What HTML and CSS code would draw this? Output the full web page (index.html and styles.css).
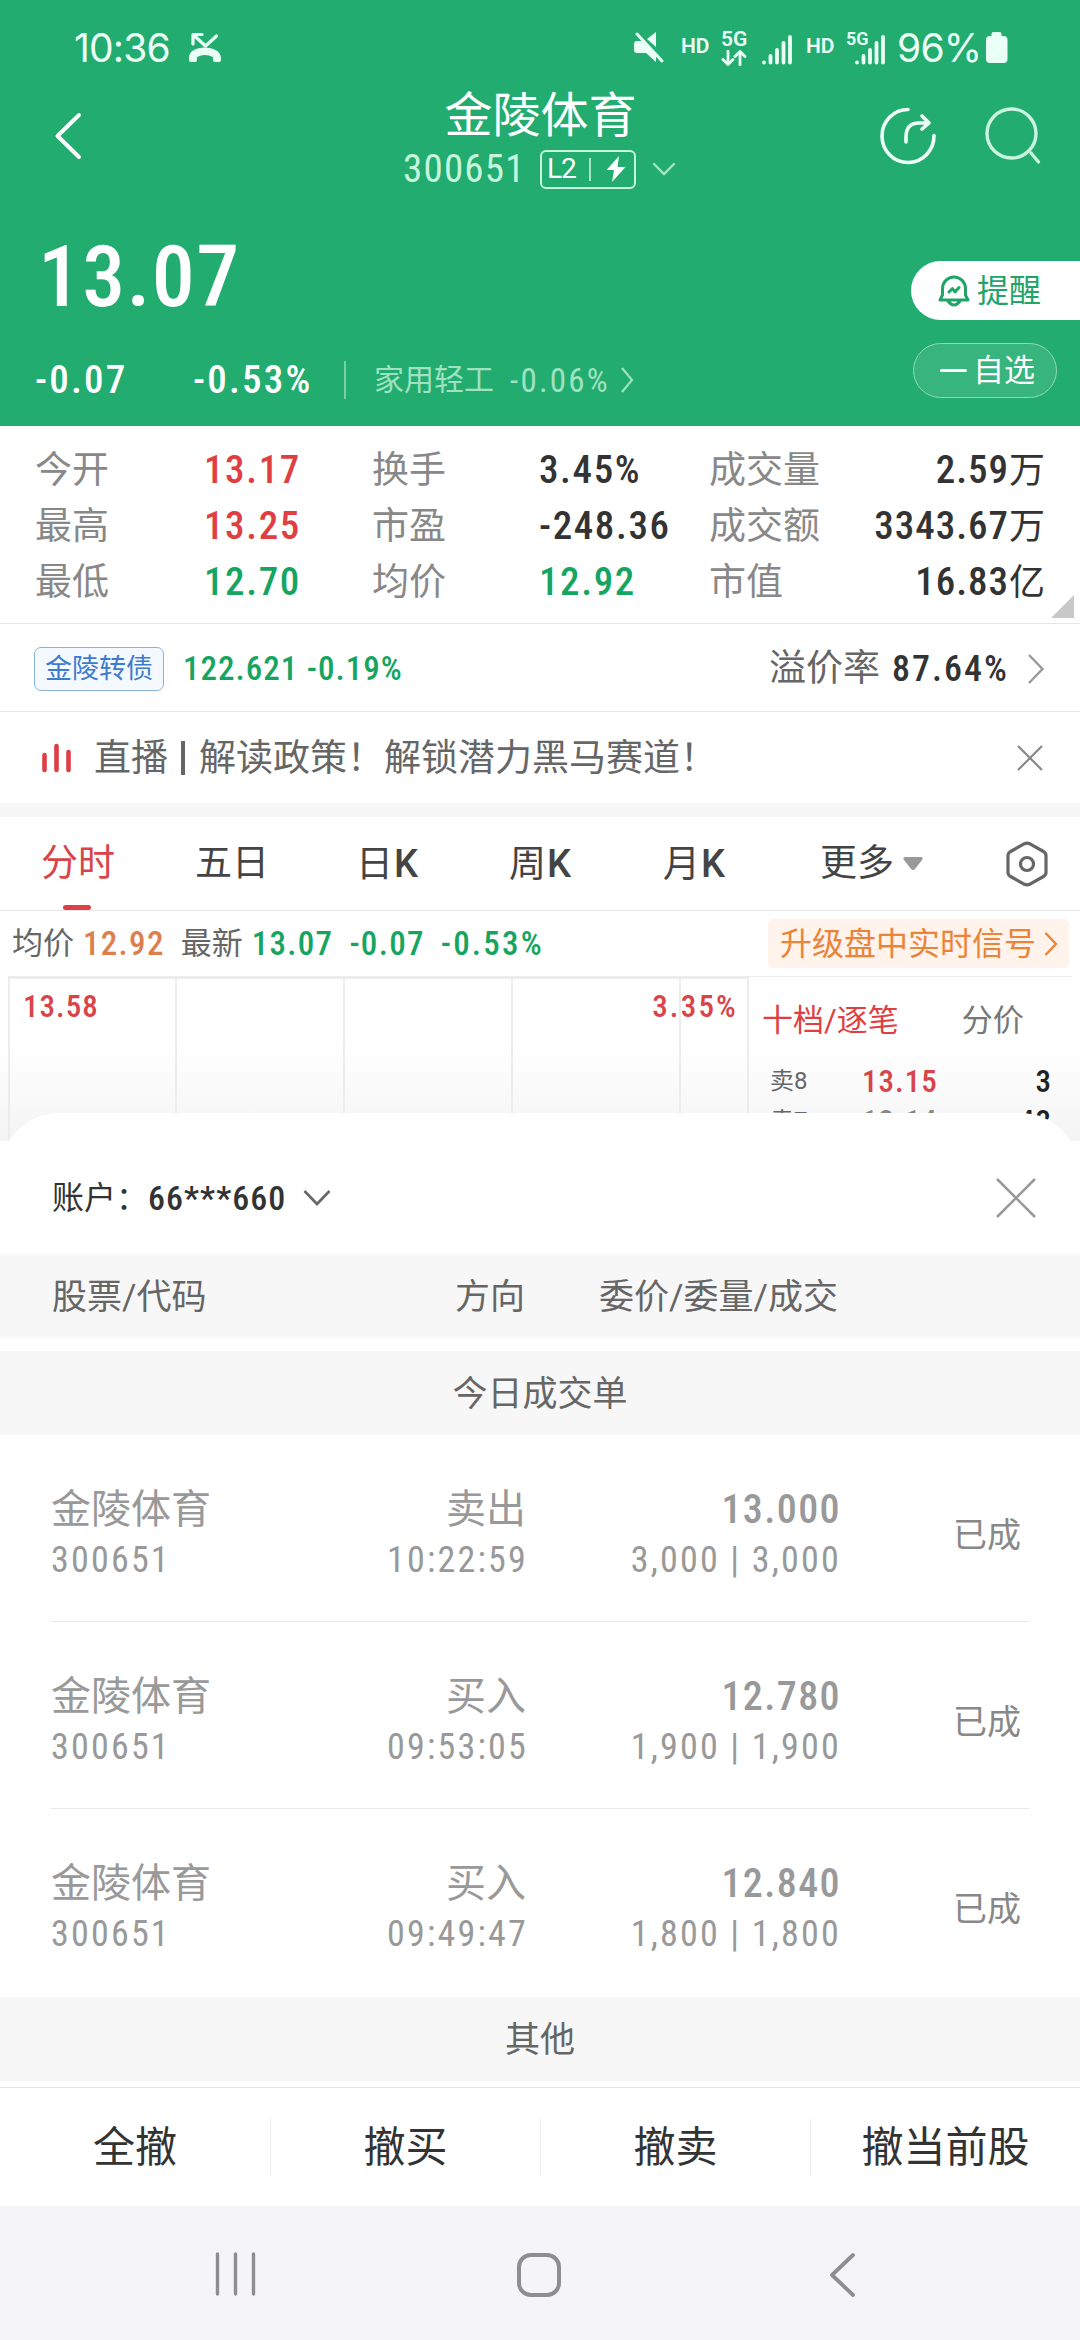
FILE: index.html
```html
<!DOCTYPE html>
<html lang="zh-CN">
<head>
    <meta charset="UTF-8">
    <meta name="viewport" content="width=device-width, initial-scale=1.0">
    <title>金陵体育 300651</title>
    <link rel="stylesheet" href="styles.css">
</head>

<body>

    <header class="top">
        <div class="status">
            <span class="clock">10:36</span>
            <svg class="missed" width="34" height="30" viewBox="0 0 34 30" fill="none" stroke="#eafff5" stroke-width="3.2" stroke-linecap="round" stroke-linejoin="round">
                <path d="M5 12V2.500H14M5.500 3L17.500 14L28.500 4"/>
                <path d="M1 26C0 12 33 12 33 26V28Q33 30 31 30H27Q25 30 25 28V25Q17 21 9 25V28Q9 30 7 30H3Q1 30 1 28Z" fill="#eafff5" stroke="none"/>
            </svg>
            <div class="status-right">
                <svg class="mute" width="32" height="32" viewBox="0 0 32 32" fill="#eafff5">
                    <path d="M0 13Q0 10 3 10H8L22 24V31L12 22H3Q0 22 0 19ZM13 8L22 1V16Z"/>
                    <path d="M3 3L28 30" stroke="#eafff5" stroke-width="3" stroke-linecap="round"/>
                </svg>
                <span class="hd">HD</span>
                <div class="net">
                    <span>5G</span>
                    <svg width="26" height="16" viewBox="0 0 26 16" fill="none" stroke="#eafff5" stroke-width="2.800" stroke-linecap="round" stroke-linejoin="round">
                        <path d="M7 1V14M2 9.500L7 14.500L12 9.500M19 15V2M14 6.500L19 1.500L24 6.500"/>
                    </svg>
                </div>
                <svg class="bars" width="30" height="30" viewBox="0 0 30 30" stroke="#eafff5" stroke-width="3.800" stroke-linecap="round">
                    <path d="M2 27.500V27.600M8.500 21V27.600M15 15V27.600M21.500 8V27.600M28 2V27.600"/>
                </svg>
                <span class="hd">HD</span>
                <div class="net2">
                    <span>5G</span>
                    <svg class="bars" width="30" height="30" viewBox="0 0 30 30" stroke="#eafff5" stroke-width="3.800" stroke-linecap="round">
                        <path d="M2 27.500V27.600M8.500 21V27.600M15 15V27.600M21.500 8V27.600M28 2V27.600"/>
                    </svg>
                </div>
                <span class="percent">96%</span>
                <svg class="battery" width="22" height="32" viewBox="0 0 22 32" fill="#eafff5">
                    <rect x="5.500" y="0" width="10" height="8" rx="2"/>
                    <rect x="0" y="4" width="21.500" height="27" rx="4"/>
                </svg>
            </div>
        </div>

        <div class="titlebar">
            <svg class="back" width="30" height="50" viewBox="0 0 30 50" fill="none" stroke="#fff" stroke-width="4" stroke-linecap="round" stroke-linejoin="round">
                <path d="M27 5L5.500 26L27 47"/>
            </svg>
            <div class="title">
                <h1>金陵体育</h1>
                <div class="sub">
                    <span class="code">300651</span>
                    <span class="level">
                        <b>L2</b><i></i>
                        <svg width="20" height="28" viewBox="0 0 20 28" fill="#fff"><path d="M13 1L0.500 15H8L6 27L19.500 12H11.500Z"/></svg>
                    </span>
                    <svg width="24" height="14" viewBox="0 0 24 14" fill="none" stroke="#a6e6c8" stroke-width="2.400" stroke-linecap="round"><path d="M2 2L12 12L22 2"/></svg>
                </div>
            </div>
            <div class="tools">
                <svg width="58" height="60" viewBox="0 0 58 60" fill="none" stroke="#eefff7" stroke-width="3.600" stroke-linecap="round" stroke-linejoin="round">
                    <path d="M29 3.500A26 26.500 0 1 0 55 29.500M27 36V31Q27 17 40 17H48M43 10L50 17L43 23"/>
                </svg>
                <svg width="58" height="60" viewBox="0 0 58 60" fill="none" stroke="#c9f5df" stroke-width="3.400" stroke-linecap="round">
                    <circle cx="27.500" cy="27.500" r="24.500"/><path d="M47 47L54.500 56"/>
                </svg>
            </div>
        </div>

        <div class="quote">
            <div class="quote-left">
                <div class="price">13.07</div>
                <div class="change">
                    <span class="diff">-0.07</span>
                    <span class="rate">-0.53%</span>
                    <a class="sector">家用轻工 <em>-0.06%</em>
                        <svg width="14" height="26" viewBox="0 0 14 26" fill="none" stroke="#9fe2c2" stroke-width="2.200"><path d="M2 1L12 13L2 25"/></svg>
                    </a>
                </div>
            </div>
            <div class="quote-right">
                <button class="remind">
                    <svg width="32" height="32" viewBox="0 0 32 32" fill="none" stroke="#21a468" stroke-width="3" stroke-linejoin="round" stroke-linecap="round">
                        <path d="M4.500 20V13.500A11.500 11.500 0 0 1 27.500 13.500V20L30 25H2ZM10 26Q16 34 22 26M11 17L14.500 13.500L17 17L21 12.500"/>
                    </svg>
                    提醒
                </button>
                <button class="fav"><i></i>自选</button>
            </div>
        </div>
    </header>

    <section class="stats">
        <span>今开</span><b class="red">13.17</b><span>换手</span><b>3.45%</b><span>成交量</span><b class="r">2.59<i>万</i></b>
        <span>最高</span><b class="red">13.25</b><span>市盈</span><b>-248.36</b><span>成交额</span><b class="r">3343.67<i>万</i></b>
        <span>最低</span><b class="green">12.70</b><span>均价</span><b class="green">12.92</b><span>市值</span><b class="r">16.83<i>亿</i></b>
        <i class="corner"></i>
    </section>

    <section class="bond">
        <span class="tag">金陵转债</span>
        <b class="green">122.621 -0.19%</b>
        <span class="premium">溢价率</span>
        <b class="premium-val">87.64%</b>
        <svg width="18" height="30" viewBox="0 0 18 30" fill="none" stroke="#999" stroke-width="2.400"><path d="M2 1L15.500 15L2 29"/></svg>
    </section>

    <section class="live">
        <svg width="30" height="30" viewBox="0 0 30 30" stroke="#dd3f46" stroke-width="4.600" stroke-linecap="round"><path d="M2.500 12V27M14.500 3V27M26.500 9V27"/></svg>
        <p>直播<i></i>解读政策！解锁潜力黑马赛道！</p>
        <svg class="close" width="26" height="26" viewBox="0 0 26 26" stroke="#888" stroke-width="2.200"><path d="M1 1L25 25M25 1L1 25"/></svg>
    </section>

    <nav class="tabs">
        <a class="active">分时</a>
        <a>五日</a>
        <a>日<b>K</b></a>
        <a>周<b>K</b></a>
        <a>月<b>K</b></a>
        <a class="more">更多<svg width="20" height="14" viewBox="0 0 20 14" fill="#999"><path d="M1.500 0H18.500Q20.500 1 19 3L12 12Q10 14 8 12L1 3Q-0.500 1 1.500 0Z"/></svg></a>
        <svg class="gear" width="42" height="46" viewBox="0 0 42 46" fill="none" stroke="#666" stroke-width="3.200" stroke-linejoin="round">
            <path d="M18.500 2.700Q21 1.500 23.500 2.700L37.500 10.500Q40 12 40 14.500V31.500Q40 34 37.500 35.500L23.500 43.300Q21 44.500 18.500 43.300L4.500 35.500Q2 34 2 31.500V14.500Q2 12 4.500 10.500Z"/><circle cx="21" cy="23" r="6.500"/>
        </svg>
    </nav>

    <section class="info">
        <span>均价</span><b class="orange">12.92</b>
        <span>最新</span><b class="green">13.07</b><b class="green">-0.07</b><b class="green">-0.53%</b>
        <a class="upgrade">升级盘中实时信号<svg width="14" height="24" viewBox="0 0 14 24" fill="none" stroke="#ea8438" stroke-width="2.400"><path d="M1.500 1L12 12L1.500 23"/></svg></a>
    </section>

    <section class="market">
        <div class="chart">
            <div class="cell"><b>13.58</b></div>
            <div class="cell"></div>
            <div class="cell"></div>
            <div class="cell"></div>
            <div class="cell"></div>
            <b class="top-rate">3.35%</b>
        </div>
        <div class="book">
            <div class="book-tabs"><a class="red">十档/逐笔</a><a>分价</a></div>
            <div class="order"><span>卖8</span><b>13.15</b><b class="qty">3</b></div>
            <div class="order"><span>卖7</span><b class="gray">13.14</b><b class="qty">43</b></div>
        </div>
    </section>

    <section class="sheet">
        <div class="account">
            <span>账户：</span><b>66***660</b>
            <svg width="28" height="18" viewBox="0 0 28 18" fill="none" stroke="#666" stroke-width="2.600"><path d="M1.500 2L14 15L26.500 2"/></svg>
            <svg class="close" width="40" height="40" viewBox="0 0 40 40" stroke="#999" stroke-width="2.600"><path d="M1 1L39 39M39 1L1 39"/></svg>
        </div>
        <div class="band head"><span>股票/代码</span><span>方向</span><span>委价/委量/成交</span></div>
        <div class="band">今日成交单</div>

        <ul class="deals">
            <li>
                <div><span>金陵体育</span><em>300651</em></div>
                <div><span>卖出</span><em>10:22:59</em></div>
                <div><b>13.000</b><em>3,000 | 3,000</em></div>
                <div class="state">已成</div>
            </li>
            <li>
                <div><span>金陵体育</span><em>300651</em></div>
                <div><span>买入</span><em>09:53:05</em></div>
                <div><b>12.780</b><em>1,900 | 1,900</em></div>
                <div class="state">已成</div>
            </li>
            <li>
                <div><span>金陵体育</span><em>300651</em></div>
                <div><span>买入</span><em>09:49:47</em></div>
                <div><b>12.840</b><em>1,800 | 1,800</em></div>
                <div class="state">已成</div>
            </li>
        </ul>

        <div class="band other">其他</div>
        <div class="actions"><a>全撤</a><a>撤买</a><a>撤卖</a><a>撤当前股</a></div>
    </section>

    <footer class="sysnav">
        <svg width="42" height="44" viewBox="0 0 42 44" stroke="#8e8e8e" stroke-width="3.400" stroke-linecap="round"><path d="M2.500 2V42M20.500 2V42M38.500 2V42"/></svg>
        <svg class="home" width="46" height="46" viewBox="0 0 46 46" fill="none" stroke="#8e8e8e" stroke-width="4"><rect x="3" y="3" width="40" height="40" rx="12"/></svg>
        <svg width="30" height="46" viewBox="0 0 30 46" fill="none" stroke="#8e8e8e" stroke-width="3.800" stroke-linecap="round" stroke-linejoin="round"><path d="M25 3L4 23L25 43"/></svg>
    </footer>

</body>
</html>
```
FILE: styles.css
```css
* {
  margin: 0;
  padding: 0;
  box-sizing: border-box;
}

body {
  width: 1080px;
  height: 2340px;
  overflow: hidden;
  background-color: #fff;
  color: #333;
  font-family: Roboto, "Noto Sans CJK SC", sans-serif;
  font-size: 37px;
  line-height: 1;
}

b, em, i {
  font-style: normal;
  font-weight: 500;
}

/* figures are set narrow and a little spaced */
b, em, .code, .price, .diff, .rate {
  font-stretch: 75%;
  letter-spacing: 1px;
}

svg {
  display: block;
  flex: none;
}

button {
  border: none;
  font: inherit;
}

.red { color: #e03f42; }
.green { color: #16a561; }
.orange { color: #dd7f4c; }

/* green header */
.top {
  height: 426px;
  background-color: #22ac6f;
  color: #fff;
}

.status {
  display: flex;
  height: 80px;
  padding: 28px 72px 0 74px;
  color: #eafff5;
}

.clock, .percent {
  font-family: Inter, sans-serif;
  font-size: 39px;
  letter-spacing: -0.800px;
}

.clock {
  width: 114px;
}

.missed {
  margin-top: 4px;
}

.status-right {
  display: flex;
  margin-left: auto;
}

.mute {
  margin-top: 3px;
}

.hd {
  margin: 8px 0 0 14px;
  width: 40px;
  font-size: 21px;
  font-weight: 600;
}

.mute + .hd {
  margin-left: 15px;
}

.net {
  width: 41px;
  padding-top: 1px;
  font-size: 21px;
  font-weight: 600;
}

.bars {
  margin-top: 7px;
}

.net2 {
  position: relative;
  width: 49px;
  padding-left: 9px;
  margin-right: 2px;
}

.net2 span {
  position: absolute;
  left: 0;
  top: 2px;
  font-size: 18px;
  font-weight: 600;
}

.percent {
  width: 89px;
}

.battery {
  margin-top: 4px;
}

.titlebar {
  display: flex;
  height: 140px;
  justify-content: space-between;
  padding: 0 38px 0 52px;
}

.back {
  margin-top: 30px;
}

.title {
  padding: 12px 0 0 122px;
}

.title h1 {
  font-size: 48px;
  font-weight: 400;
  text-align: center;
  padding-right: 2px;
}

.sub {
  display: flex;
  align-items: center;
  height: 40px;
  margin-top: 9px;
  margin-left: -4px;
}

.code {
  width: 137px;
  color: #c6f5de;
  font-size: 39px;
  letter-spacing: 1.200px;
}

.level {
  display: flex;
  align-items: center;
  width: 96px;
  height: 39px;
  margin-right: 16px;
  padding-left: 5px;
  border: 2px solid #c6f5de;
  border-radius: 6px;
}

.level b {
  width: 42px;
  font-size: 28px;
  font-stretch: 100%;
  font-weight: 400;
  letter-spacing: -1px;
}

.level i {
  width: 2px;
  height: 23px;
  margin-right: 15px;
  background-color: #a6e6c8;
}

.tools {
  display: flex;
  gap: 47px;
  padding-top: 26px;
}

.quote {
  display: flex;
  justify-content: space-between;
}

.price {
  height: 99px;
  padding: 14px 0 0 38px;
  font-size: 86px;
  font-weight: 500;
  letter-spacing: 1.300px;
}

.change {
  display: flex;
  align-items: center;
  height: 40px;
  margin-top: 41px;
  padding-left: 35px;
}

.diff {
  width: 158px;
}

.rate {
  width: 151px;
}

.diff, .rate {
  font-size: 39px;
  font-weight: 500;
  letter-spacing: 2.200px;
}

.sector {
  display: flex;
  align-items: center;
  height: 38px;
  padding-left: 28px;
  border-left: 2px solid #7bcfa8;
  color: #9fe2c2;
  font-size: 30px;
}

.sector em {
  width: 110px;
  margin-left: 16px;
  font-size: 33px;
  font-weight: 400;
  letter-spacing: 2.200px;
}

.quote-right {
  width: 169px;
  padding-top: 41px;
}

.remind {
  display: flex;
  align-items: center;
  gap: 7px;
  width: 169px;
  height: 59px;
  padding-left: 27px;
  border-radius: 30px 0 0 30px;
  background-color: #fff;
  color: #21a468;
  font-size: 32px;
}

.fav {
  display: flex;
  align-items: center;
  gap: 6px;
  width: 144px;
  height: 55px;
  margin: 23px 0 0 2px;
  padding-left: 26px;
  border: 1px solid #90d8b6;
  border-radius: 28px;
  background-color: #38b47e;
  color: #fff;
  font-size: 31px;
}

.fav i {
  width: 27px;
  height: 3px;
  border-radius: 2px;
  background-color: #fff;
}

/* day figures */
.stats {
  position: relative;
  display: grid;
  grid-template-columns: 169px 168px 167px 170px 130px 1fr;
  grid-auto-rows: 56px;
  align-items: center;
  height: 198px;
  padding: 16px 35px 0 35px;
  border-bottom: 1px solid #e6e6e6;
}

.stats span {
  color: #888;
}

.stats b {
  font-size: 39px;
  letter-spacing: 1.600px;
  white-space: nowrap;
}

.stats .r {
  justify-self: end;
  letter-spacing: 1px;
}

.stats b i {
  font-size: 36px;
  font-weight: 400;
  letter-spacing: 0;
}

.corner {
  position: absolute;
  right: 6px;
  bottom: 5px;
  width: 23px;
  height: 23px;
  background-color: #c8c8c8;
  clip-path: polygon(100% 0, 100% 100%, 0 100%);
}

.bond {
  display: flex;
  align-items: center;
  height: 88px;
  padding: 2px 35px 0 34px;
  border-bottom: 1px solid #e6e6e6;
}

.tag {
  width: 130px;
  height: 44px;
  margin-right: 19px;
  border: 1px solid #8db2da;
  border-radius: 7px;
  background-color: #f4f9ff;
  color: #3e7bd0;
  font-size: 27px;
  line-height: 43px;
  text-align: center;
}

.bond b {
  font-size: 33px;
}

.premium {
  margin-left: auto;
  margin-right: 12px;
  color: #666;
}

.bond .premium-val {
  width: 135px;
  font-size: 36px;
  letter-spacing: 2px;
}

.live {
  display: flex;
  align-items: center;
  height: 105px;
  padding: 1px 37px 0 42px;
  border-bottom: 14px solid #f7f7f7;
  color: #666;
}

.live p {
  display: flex;
  margin-left: 22px;
  padding-top: 1px;
}

.live p i {
  width: 4px;
  height: 34px;
  margin: 1px 14px 0 13px;
  background-color: #666;
}

.close {
  margin-left: auto;
}

.tabs {
  position: relative;
  display: grid;
  grid-template-columns: 154px 161px 153px 154px 157px 186px 42px;
  align-items: center;
  height: 94px;
  padding-left: 41px;
  border-bottom: 1px solid #e8e8e8;
  color: #444;
}

.tabs b {
  margin-left: 1px;
  font-stretch: 100%;
  font-size: 38px;
}

.tabs .active {
  color: #d9434a;
}

.tabs .active::after {
  content: "";
  position: absolute;
  left: 63px;
  bottom: 0;
  width: 28px;
  height: 5px;
  border-radius: 3px;
  background-color: #dd3f46;
}

.more {
  display: flex;
  align-items: center;
  gap: 9px;
}

.info {
  display: flex;
  align-items: center;
  height: 65px;
  padding: 0 11px 0 12px;
  color: #666;
  font-size: 31px;
}

.info b {
  margin: 0 16px 0 9px;
  font-size: 33px;
  letter-spacing: 1.300px;
}

.info b + b {
  margin-left: 0;
}

.info b:nth-of-type(4) {
  letter-spacing: 2.200px;
}

.upgrade {
  display: flex;
  align-items: center;
  gap: 8px;
  width: 301px;
  height: 49px;
  margin-left: auto;
  padding-left: 12px;
  border-radius: 5px;
  background-color: #fff3ec;
  color: #ea8438;
  font-size: 32px;
}

/* intraday chart and order book, the lower part is under the sheet */
.market {
  display: flex;
  height: 165px;
  padding: 0 8px;
  overflow: hidden;
  background: linear-gradient(#fff 40%, #f4f4f4);
}

.chart {
  position: relative;
  display: grid;
  grid-template-columns: 167px 168px 168px 168px 1fr;
  width: 741px;
  border-top: 3px solid #ececec;
  border-left: 2px solid #ececec;
}

.cell {
  padding: 12px 0 0 13px;
  border-right: 2px solid #ececec;
}

.chart b {
  display: block;
  color: #d9434a;
  font-size: 31px;
}

.chart .top-rate {
  position: absolute;
  right: 11px;
  top: 12px;
  letter-spacing: 2.200px;
}

.book {
  flex: 1;
  border-top: 1px solid #ececec;
}

.book-tabs {
  display: flex;
  gap: 63px;
  height: 84px;
  padding: 28px 0 0 13px;
  color: #777;
  font-size: 31px;
}

.order {
  display: grid;
  grid-template-columns: 92px 1fr auto;
  align-items: center;
  height: 40px;
  padding: 0 20px 0 21px;
  color: #666;
  font-size: 24px;
}

.order b {
  color: #d9434a;
  font-size: 31px;
}

.order .gray {
  color: #888;
}

.order .qty {
  color: #222;
}

/* deals sheet */
.sheet {
  position: relative;
  height: 1093px;
  margin-top: -28px;
  border-radius: 60px 60px 0 0;
  background-color: #fff;
}

.account {
  display: flex;
  align-items: center;
  height: 141px;
  padding: 28px 44px 0 52px;
  font-size: 32px;
}

.account b {
  width: 155px;
  font-size: 34px;
}

.band {
  height: 84px;
  background-color: #f7f7f7;
  color: #666;
  font-size: 35px;
  line-height: 87px;
  text-align: center;
}

.head {
  display: grid;
  grid-template-columns: 260px 213px 313px;
  margin-bottom: 13px;
  padding-left: 52px;
  text-align: right;
}

.head span:first-child {
  text-align: left;
}

.deals {
  margin: 0 51px;
  list-style: none;
}

.deals li {
  display: grid;
  grid-template-columns: 260px 215px 313px 1fr;
  height: 187px;
  padding-top: 52px;
  border-bottom: 1px solid #e8e8e8;
  color: #999;
  text-align: right;
}

.deals li:last-child {
  border-bottom: none;
}

.deals li > div:first-child {
  text-align: left;
}

.deals span, .deals b, .deals em {
  display: block;
  height: 50px;
  font-size: 40px;
  line-height: 46px;
  white-space: nowrap;
}

.deals b {
  margin-right: -2px;
  letter-spacing: 1.400px;
}

.deals em {
  margin-right: -2px;
  font-size: 36px;
  font-weight: 400;
  letter-spacing: 2.200px;
}

.deals .state {
  padding: 31px 8px 0 0;
  color: #888;
  font-size: 34px;
}

.other {
  margin-top: 1px;
}

.actions {
  display: grid;
  grid-template-columns: repeat(4, 1fr);
  margin-top: 6px;
  border-top: 1px solid #e6e6e6;
  padding: 31px 0;
  font-size: 42px;
  line-height: 57px;
  text-align: center;
}

.actions a + a {
  border-left: 1px solid #ededed;
}

.sysnav {
  display: flex;
  justify-content: space-between;
  height: 135px;
  padding: 46px 222px 0 215px;
  background-color: #f5f5f8;
}

.home {
  margin-right: 8px;
}
```
